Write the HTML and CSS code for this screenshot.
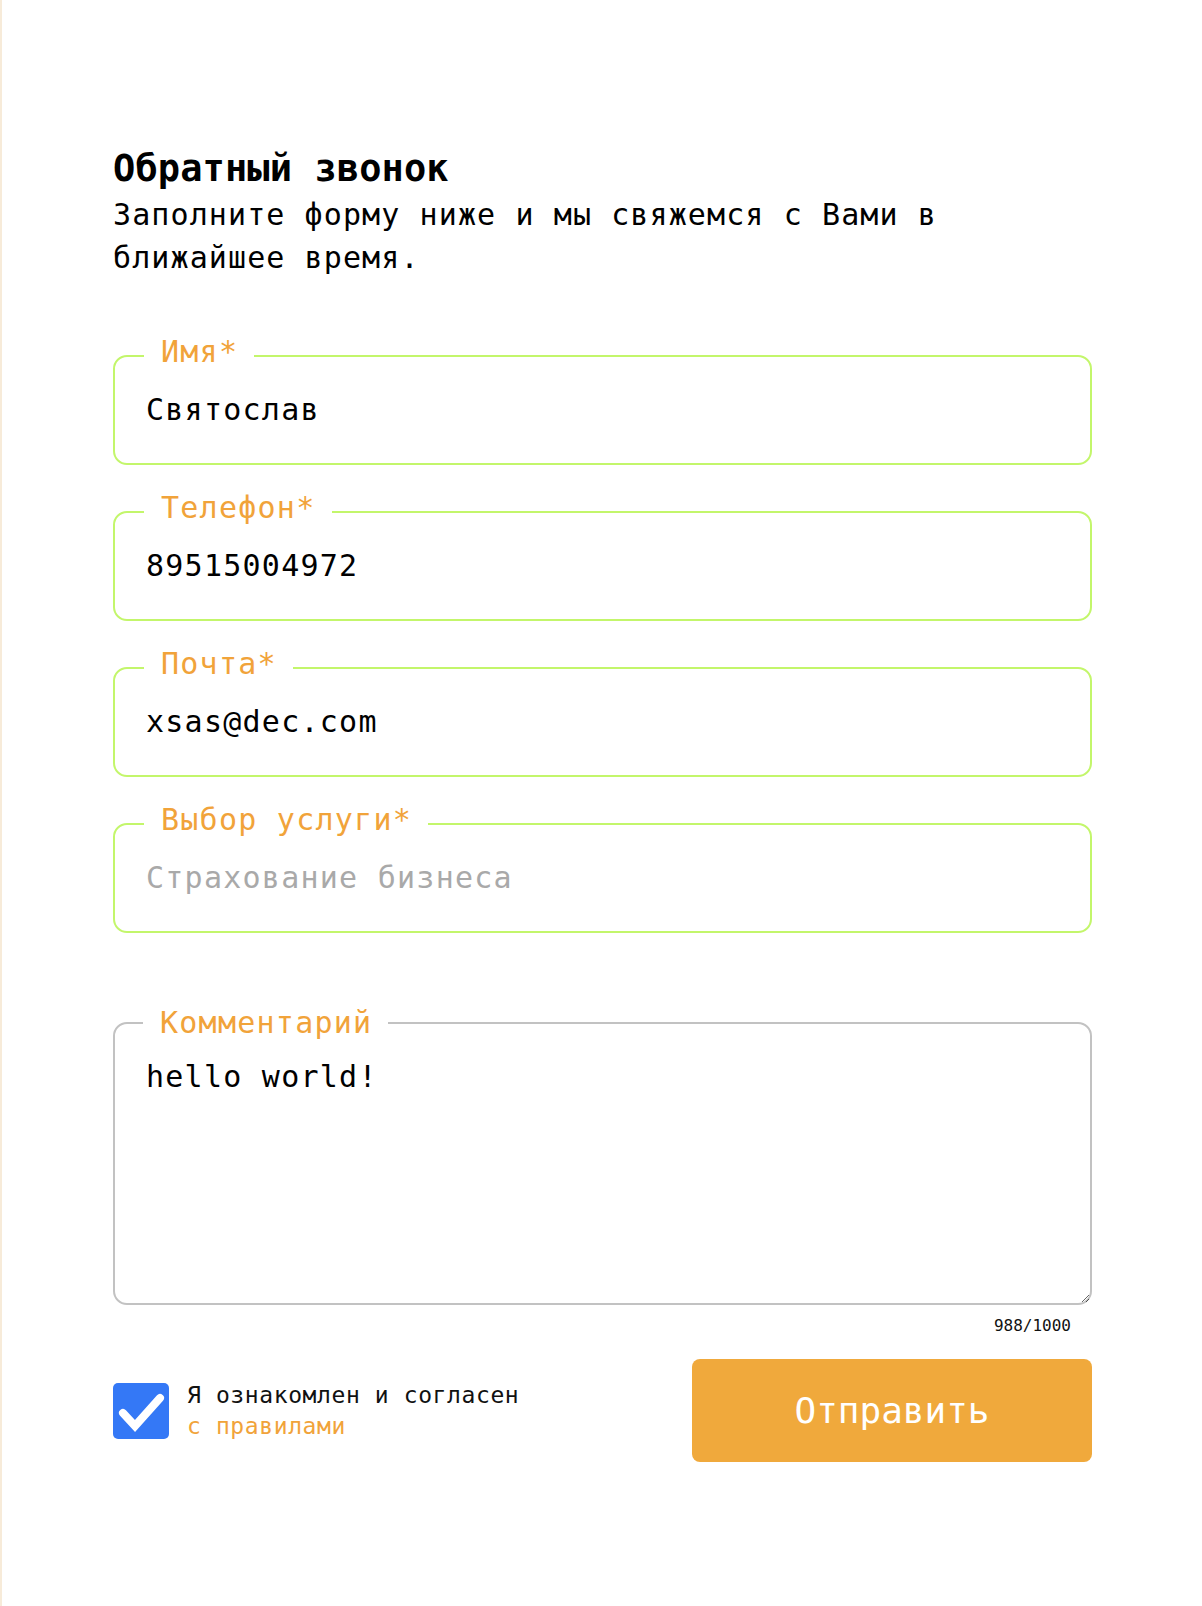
FILE: index.html
```html
<!DOCTYPE html>
<html lang="ru">
<head>
<meta charset="utf-8">
<title>Обратный звонок</title>
<link rel="stylesheet" href="styles.css">
</head>
<body>
<div class="page">
  <h1 class="title">Обратный звонок</h1>
  <p class="subtitle">Заполните форму ниже и мы свяжемся с Вами в ближайшее время.</p>

  <form class="form">
    <div class="field">
      <span class="label">Имя*</span>
      <span class="value">Святослав</span>
    </div>
    <div class="field">
      <span class="label">Телефон*</span>
      <span class="value">89515004972</span>
    </div>
    <div class="field">
      <span class="label">Почта*</span>
      <span class="value">xsas@dec.com</span>
    </div>
    <div class="field">
      <span class="label">Выбор услуги*</span>
      <span class="value placeholder">Страхование бизнеса</span>
    </div>

    <div class="comment">
      <span class="label">Комментарий</span>
      <textarea class="textarea">hello world!</textarea>
    </div>
    <div class="counter">988/1000</div>

    <div class="bottom">
      <div class="agree">
        <span class="checkbox">
          <svg width="56" height="56" viewBox="0 0 56 56">
            <path d="M10 30 L22 43 L47 15" fill="none" stroke="#fff" stroke-width="8" stroke-linecap="round" stroke-linejoin="miter"/>
          </svg>
        </span>
        <span class="agree-text">Я ознакомлен и согласен<br><span class="rules">с правилами</span></span>
      </div>
      <button type="button" class="submit">Отправить</button>
    </div>
  </form>
</div>
</body>
</html>
```

FILE: styles.css
```css
html, body {
  margin: 0;
  padding: 0;
  background: #fff;
}

body {
  font-family: "DejaVu Sans Mono", "Liberation Mono", monospace;
  color: #000;
}

.page {
  min-height: 1606px;
  box-sizing: border-box;
  border-left: 2px solid #f7ebd9;
  padding: 147px 110px 0 111px;
}

.title {
  margin: 0;
  font-size: 37px;
  line-height: 43px;
  font-weight: bold;
  letter-spacing: 0.1px;
}

.subtitle {
  margin: 3px 0 0;
  font-size: 30px;
  line-height: 43px;
  letter-spacing: 1.1px;
}

.form {
  margin-top: 76px;
  display: flex;
  flex-direction: column;
}

.field {
  position: relative;
  height: 110px;
  box-sizing: border-box;
  border: 2px solid #c3f66b;
  border-radius: 14px;
  display: flex;
  align-items: center;
  padding: 0 31px;
  margin-bottom: 46px;
}

.label {
  position: absolute;
  top: -20px;
  left: 29px;
  padding: 0 16px 0 17px;
  background: #fff;
  color: #f1a33a;
  font-size: 30px;
  line-height: 30px;
  letter-spacing: 1.25px;
  z-index: 1;
}

.value {
  font-size: 30px;
  line-height: 30px;
  letter-spacing: 1.25px;
  color: #000;
}

.placeholder {
  color: #a9a9a9;
}

.comment {
  position: relative;
  margin-top: 43px;
}

.comment .label {
  top: -14px;
  padding-left: 17px;
  left: 30px;
}

.textarea {
  display: block;
  width: 100%;
  height: 283px;
  box-sizing: border-box;
  border: 2px solid #c2c2c2;
  border-radius: 14px;
  padding: 38px 31px 0;
  margin: 0;
  font-family: "DejaVu Sans Mono", "Liberation Mono", monospace;
  font-size: 30px;
  line-height: 30px;
  letter-spacing: 1.25px;
  color: #000;
  background: #fff;
  resize: vertical;
  outline: none;
}

.counter {
  align-self: flex-end;
  margin: 11px 21px 0 0;
  font-size: 16px;
  line-height: 20px;
  color: #111;
}

.bottom {
  margin-top: 23px;
  display: flex;
  align-items: center;
  justify-content: space-between;
}

.agree {
  display: flex;
  align-items: center;
  gap: 18px;
}

.checkbox {
  width: 56px;
  height: 56px;
  border-radius: 5px;
  background: #3478f6;
  display: flex;
}

.agree-text {
  font-size: 23px;
  line-height: 31px;
  letter-spacing: 0.6px;
  color: #111;
}

.rules {
  color: #f1a33a;
}

.submit {
  width: 400px;
  height: 103px;
  border: none;
  border-radius: 8px;
  background: #f0a93c;
  color: #fff;
  font-family: "DejaVu Sans Mono", "Liberation Mono", monospace;
  font-size: 36px;
  cursor: pointer;
  padding: 0;
}
```
